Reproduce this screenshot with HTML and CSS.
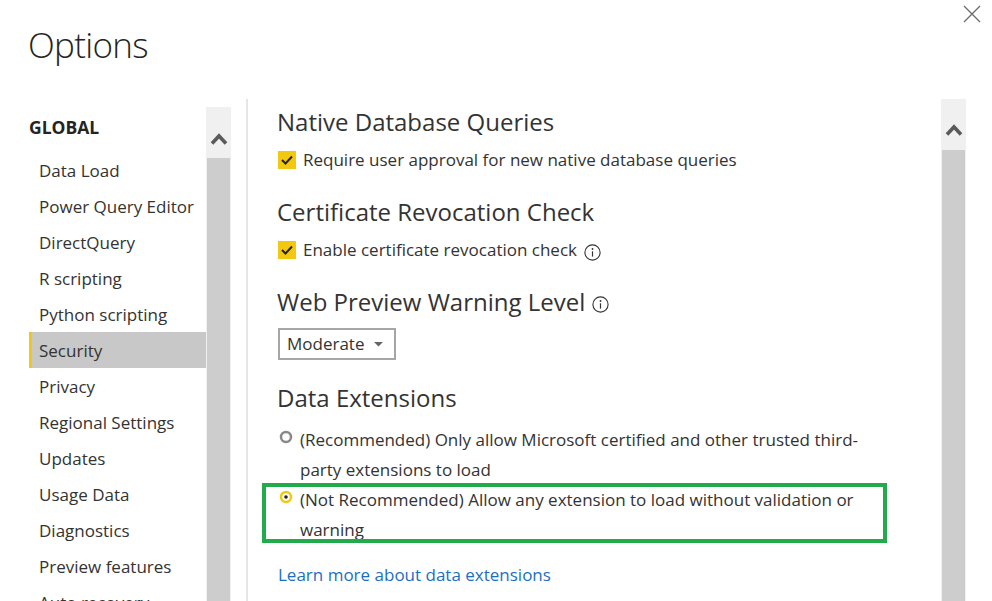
FILE: index.html
```html
<!DOCTYPE html>
<html>
<head>
<meta charset="utf-8">
<link rel="stylesheet" href="styles.css">
</head>
<body>
<div class="dialog">
  <header class="header">
    <h1 class="title">Options</h1>
    <button class="close" aria-label="Close">
      <svg width="18" height="18" viewBox="0 0 18 18"><path d="M1 1L17 17M17 1L1 17" stroke="#6b6b6b" stroke-width="1.3" fill="none"/></svg>
    </button>
  </header>
  <div class="main">
    <nav class="nav">
      <div class="nav-group">GLOBAL</div>
      <div class="nav-item">Data Load</div>
      <div class="nav-item">Power Query Editor</div>
      <div class="nav-item">DirectQuery</div>
      <div class="nav-item">R scripting</div>
      <div class="nav-item">Python scripting</div>
      <div class="nav-item active">Security</div>
      <div class="nav-item">Privacy</div>
      <div class="nav-item">Regional Settings</div>
      <div class="nav-item">Updates</div>
      <div class="nav-item">Usage Data</div>
      <div class="nav-item">Diagnostics</div>
      <div class="nav-item">Preview features</div>
      <div class="nav-item">Auto recovery</div>
    </nav>
    <div class="scrollbar scrollbar-left">
      <div class="scroll-arrow">
        <svg width="18" height="13" viewBox="0 0 18 13"><polyline points="2,11.5 9,4 16,11.5" stroke="#5a5a5a" stroke-width="3.6" fill="none" stroke-linejoin="miter"/></svg>
      </div>
      <div class="scroll-thumb"></div>
    </div>
    <div class="divider"></div>
    <section class="content">
      <h2 class="heading h-first">Native Database Queries</h2>
      <div class="check-row">
        <svg class="checkbox" width="18" height="18" viewBox="0 0 18 18"><rect width="18" height="18" fill="#f2c811"/><polyline points="4,9 7.5,12.5 14,5.5" stroke="#252423" stroke-width="2" fill="none"/></svg>
        <span>Require user approval for new native database queries</span>
      </div>
      <h2 class="heading">Certificate Revocation Check</h2>
      <div class="check-row">
        <svg class="checkbox" width="18" height="18" viewBox="0 0 18 18"><rect width="18" height="18" fill="#f2c811"/><polyline points="4,9 7.5,12.5 14,5.5" stroke="#252423" stroke-width="2" fill="none"/></svg>
        <span>Enable certificate revocation check</span>
        <svg class="info info-text" width="17" height="17" viewBox="0 0 17 17"><circle cx="8.5" cy="8.5" r="7.6" stroke="#333" stroke-width="1.1" fill="none"/><circle cx="8.5" cy="5" r="0.9" fill="#333"/><path d="M8.5 7.3V12.6" stroke="#333" stroke-width="1.2"/></svg>
      </div>
      <h2 class="heading heading-info">Web Preview Warning Level
        <svg class="info info-head" width="17" height="17" viewBox="0 0 17 17"><circle cx="8.5" cy="8.5" r="7.6" stroke="#333" stroke-width="1.1" fill="none"/><circle cx="8.5" cy="5" r="0.9" fill="#333"/><path d="M8.5 7.3V12.6" stroke="#333" stroke-width="1.2"/></svg>
      </h2>
      <div class="dropdown">
        <span>Moderate</span>
        <svg width="9" height="5" viewBox="0 0 9 5"><polygon points="0,0 9,0 4.5,4.5" fill="#666"/></svg>
      </div>
      <h2 class="heading h-ext">Data Extensions</h2>
      <div class="radios">
        <div class="radio-row">
          <svg class="radio" width="14" height="14" viewBox="0 0 14 14"><circle cx="7" cy="7" r="5" stroke="#8a8886" stroke-width="2.5" fill="#fff"/></svg>
          <span class="radio-label">(Recommended) Only allow Microsoft certified and other trusted third-party extensions to load</span>
        </div>
        <div class="radio-row highlight">
          <svg class="radio" width="14" height="14" viewBox="0 0 14 14"><circle cx="7" cy="7" r="5" stroke="#f2c811" stroke-width="2.5" fill="#fff"/><circle cx="7" cy="7" r="1.8" fill="#252423"/></svg>
          <span class="radio-label">(Not Recommended) Allow any extension to load without validation or warning</span>
        </div>
      </div>
      <a class="link" href="#">Learn more about data extensions</a>
    </section>
    <div class="scrollbar scrollbar-right">
      <div class="scroll-arrow">
        <svg width="18" height="13" viewBox="0 0 18 13"><polyline points="2,11.5 9,4 16,11.5" stroke="#5a5a5a" stroke-width="3.6" fill="none" stroke-linejoin="miter"/></svg>
      </div>
      <div class="scroll-thumb"></div>
    </div>
  </div>
</div>
</body>
</html>
```

FILE: styles.css
```css
*, *::before, *::after { box-sizing: border-box; }
html, body {
  margin: 0;
  padding: 0;
  width: 992px;
  height: 601px;
  overflow: hidden;
  background: #fff;
}
body {
  font-family: "Open Sans", "Noto Sans", sans-serif;
  color: #333;
}
.dialog {
  width: 992px;
  height: 601px;
  display: flex;
  flex-direction: column;
}
.header {
  height: 99px;
  display: flex;
  justify-content: space-between;
  align-items: flex-start;
  flex-shrink: 0;
}
.title {
  margin: 27px 0 0 28px;
  font-size: 35px;
  line-height: 35px;
  font-weight: 300;
  letter-spacing: -0.7px;
  color: #252423;
}
.close {
  margin: 5px 11px 0 0;
  padding: 0;
  border: 0;
  background: none;
  width: 18px;
  height: 18px;
  display: block;
}
.close svg { display: block; }
.main {
  flex: 1;
  display: flex;
  min-height: 0;
}
.nav {
  width: 206px;
  padding-left: 29px;
  flex-shrink: 0;
}
.nav-group {
  padding-top: 16px;
  line-height: 24px;
  margin-bottom: 13px;
  font-size: 17.5px;
  font-weight: 700;
  color: #252423;
}
.nav-item {
  height: 36px;
  line-height: 37px;
  padding-left: 10px;
  font-size: 17px;
  white-space: nowrap;
}
.nav-item.active {
  background: #c8c8c8;
  border-left: 3px solid #f2c811;
  padding-left: 7px;
}
.scrollbar {
  width: 25px;
  flex-shrink: 0;
  background: #f0f0f0;
  display: flex;
  flex-direction: column;
}
.scrollbar-left { margin-top: 8px; }
.scroll-arrow {
  height: 51px;
  display: flex;
  justify-content: center;
  padding-top: 25px;
}
.scroll-arrow svg { display: block; }
.scrollbar-right .scroll-arrow { padding-top: 24px; }
.scroll-thumb {
  flex: 1;
  margin: 0 1px;
  background: #cdcdcd;
}
.divider {
  width: 2px;
  margin-left: 15px;
  background: #e6e6e6;
  flex-shrink: 0;
}
.content {
  flex: 1;
  padding-left: 29px;
  min-width: 0;
}
.heading {
  margin: 24px 0 0 0;
  font-size: 24px;
  line-height: 32px;
  font-weight: 400;
  color: #333;
}
.h-first { margin-top: 7px; }
.heading-info {
  display: flex;
  align-items: center;
  gap: 7px;
}
.info-head { margin-top: 5px; }
.check-row {
  margin-top: 10px;
  display: flex;
  align-items: center;
  gap: 7px;
  font-size: 17px;
  line-height: 24px;
  padding-left: 1px;
}
.checkbox { display: block; flex-shrink: 0; }
.info-text { margin-top: 4px; }
.dropdown {
  margin-top: 10px;
  margin-left: 1px;
  width: 118px;
  height: 32px;
  border: 2px solid #a6a6a6;
  display: flex;
  align-items: center;
  justify-content: space-between;
  padding: 0 11px 0 7px;
  font-size: 17px;
  line-height: 28px;
}
.dropdown svg { display: block; }
.h-ext { margin-top: 22px; }
.radios { margin-top: 11px; }
.radio-row {
  display: flex;
  align-items: flex-start;
  gap: 7px;
  font-size: 17px;
  line-height: 30px;
  padding-left: 2px;
  position: relative;
}
.radio {
  display: block;
  flex-shrink: 0;
  margin-top: 5px;
}
.radio-label { width: 580px; }
.highlight::after {
  content: "";
  position: absolute;
  left: -15px;
  top: -2px;
  width: 625px;
  height: 60px;
  border: 4px solid #22ab4b;
  pointer-events: none;
}
.link {
  display: inline-block;
  margin-top: 18px;
  margin-left: 1px;
  font-size: 17px;
  line-height: 24px;
  color: #1b6fc3;
  text-decoration: none;
}
.scrollbar-right { margin-left: 0; margin-right: 26px; }
```
